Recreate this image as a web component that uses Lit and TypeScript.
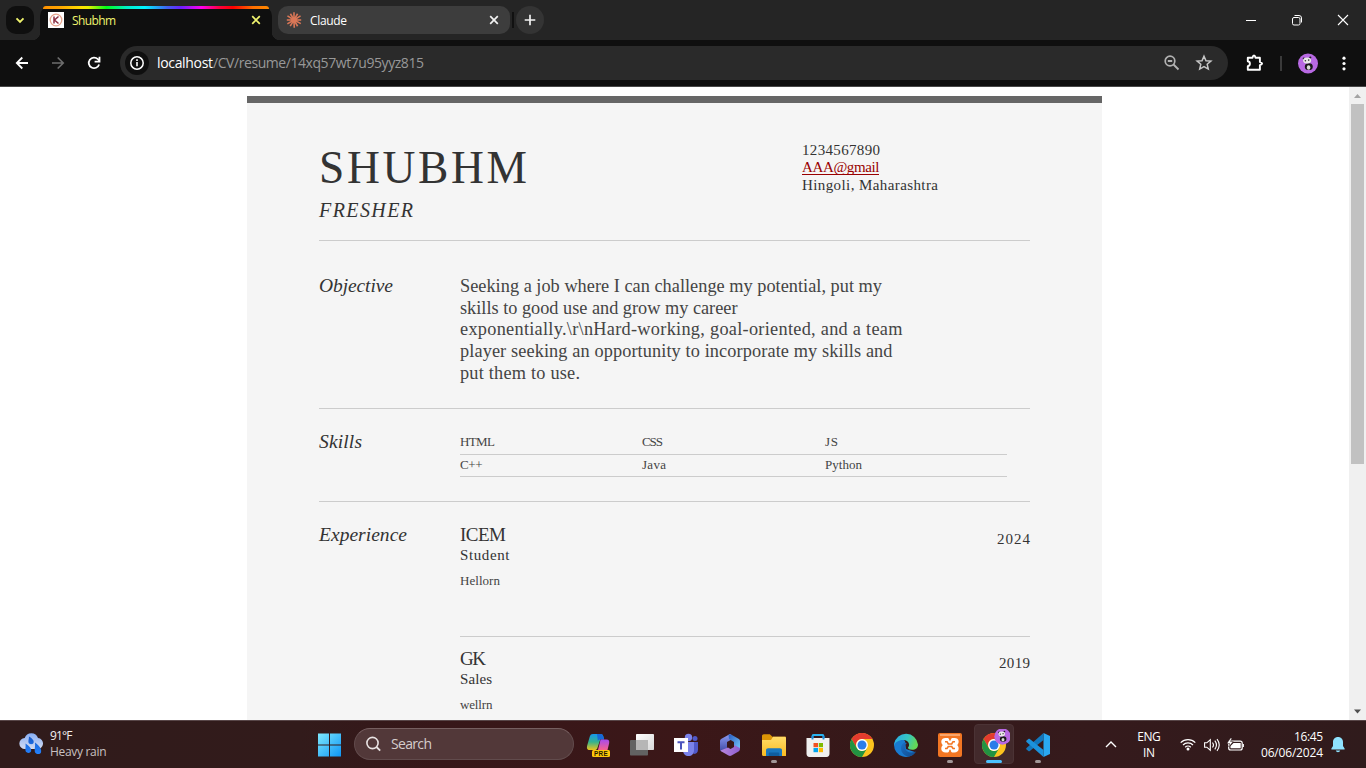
import { LitElement, html, css, svg } from "lit";
import { customElement, property } from "lit/decorators.js";

/** One line of text whose tracking is computed so that it spans a given measure. */
@customElement("fit-text")
class FitText extends LitElement {
  @property({ type: Number }) w = 0;
  @property() text = "";
  static styles = css`
    :host { display: inline-block; white-space: pre; }
    span { display: inline-block; }
  `;
  render() {
    return html`<span>${this.text}</span>`;
  }
  updated() {
    const el = this.renderRoot.querySelector("span") as HTMLElement;
    el.style.letterSpacing = "0px";
    const n = this.text.length - 1;
    const gap = n > 0 ? (this.w - el.getBoundingClientRect().width) / n : 0;
    el.style.letterSpacing = gap.toFixed(3) + "px";
    el.style.marginRight = (-gap).toFixed(3) + "px";
  }
}

const fit = (text: string, w: number) => html`<fit-text .w=${w} .text=${text}></fit-text>`;

const panda = svg`
  <circle cx="0" cy="0" r="10" fill="#b869e3"/>
  <ellipse cx="0.8" cy="3.200" rx="4" ry="3.400" fill="#1a1a1a"/>
  <ellipse cx="0.6" cy="4" rx="1.800" ry="2.200" fill="#dcdcdc"/>
  <circle cx="-4.200" cy="-5" r="1.100" fill="#222"/><circle cx="2.300" cy="-6" r="1.100" fill="#222"/>
  <ellipse cx="-0.9" cy="-3" rx="4" ry="3" fill="#e9e9e9"/>
  <circle cx="-2.600" cy="-2.800" r=".8" fill="#333"/><circle cx="0.7" cy="-3.400" r=".8" fill="#333"/>`;

const chromeLogo = svg`
  <circle cx="12" cy="12" r="12" fill="#fcc31e"/>
  <path d="M1.6 6A12 12 0 0 1 22.4 6H12A6 6 0 0 0 6.8 15Z" fill="#e33b2e"/>
  <path d="M1.6 6A12 12 0 0 0 12 24L17.2 15A6 6 0 0 1 6.8 15Z" fill="#229342"/>
  <circle cx="12" cy="12" r="5.9" fill="#fff"/><circle cx="12" cy="12" r="4.5" fill="#2b7de9"/>`;

const icon = (body: unknown, w = 24, h = 24) =>
  html`<svg width=${w} height=${h} viewBox="0 0 ${w} ${h}" fill="none">${body}</svg>`;

const icons = {
  copilot: icon(svg`
    <defs><linearGradient id="ca" x1="0" y1="0" x2="0" y2="1"><stop offset="0" stop-color="#1597ec"/><stop offset=".5" stop-color="#35b28f"/><stop offset="1" stop-color="#f0c419"/></linearGradient>
    <linearGradient id="cb" x1="0" y1="0" x2="0" y2="1"><stop offset="0" stop-color="#a54af0"/><stop offset="1" stop-color="#f8628c"/></linearGradient></defs>
    <path d="M7 1h7.5c2 0 2.5 1 3 3l.6 2.2h-3.8L11.4 15c-.5 1.500-1.400 2-2.800 2H3.800C1 17 .6 15 1.200 12.500L3.800 3.500C4.300 1.800 5.300 1 7 1Z" fill="url(#ca)"/>
    <path d="M11 1h3.500c2 0 2.500 1 3 3l.6 2.400h-3.800c-1.300 0-2 .6-2.400 1.800Z" fill="#1668d8"/>
    <path d="M15.500 6.400h5c2.400 0 3.200 1.500 2.600 4l-1.600 6.600H12l2-8c.4-1.700 0-2.600 1.500-2.600Z" fill="url(#cb)"/>
    <rect x="6" y="17" width="18" height="7" rx="1.500" fill="#fdc60b"/>
    <text x="15" y="22.800" font-family="Liberation Sans" font-size="6.300" font-weight="700" text-anchor="middle" letter-spacing=".4" fill="#221a00">PRE</text>`),
  taskview: icon(svg`
    <defs><linearGradient id="tv" x1="0" y1="0" x2="1" y2="1"><stop stop-color="#fff"/><stop offset="1" stop-color="#d8d8d8"/></linearGradient></defs>
    <rect x="0" y="7" width="18" height="15.500" rx=".8" fill="#626262"/>
    <rect x="6" y="1" width="18" height="16" rx=".8" fill="url(#tv)"/>
    <path d="M6 7h12v10H6z" fill="#b6b6b6"/>`),
  teams: icon(svg`
    <circle cx="21" cy="5.500" r="2.500" fill="#5059c9"/><circle cx="14.500" cy="4.500" r="3.700" fill="#7b83eb"/>
    <path d="M17 9h7v7.500c0 3-1.800 4.500-4.500 4.500Z" fill="#5059c9"/>
    <path d="M9 9h11v8c0 4-2.400 6-5.500 6S9 21 9 17Z" fill="#7b83eb"/>
    <path d="M0 5h14v14H0z" fill="#fff"/><path d="M3.500 8.300h7v1.900H8V16.500H6v-6.300H3.500z" fill="#4b53bc"/>`),
  m365: icon(svg`
    <defs><linearGradient id="ma" x1="0" y1="0" x2="0" y2="1"><stop stop-color="#8d9df5"/><stop offset="1" stop-color="#414aa4"/></linearGradient>
    <linearGradient id="mb" x1="0" y1="0" x2="1" y2="1"><stop stop-color="#275ac0"/><stop offset="1" stop-color="#75c8fb"/></linearGradient>
    <linearGradient id="mc" x1="0" y1="0" x2="1" y2="0"><stop stop-color="#b987dc"/><stop offset="1" stop-color="#8d5ed0"/></linearGradient></defs>
    <path d="M12 1 3.500 5.700C2.500 6.300 2 7 2 8.200v8c0 1.200.7 1.800 1.700 2.300L9 16V9l4.500-2.500V2Z" fill="url(#ma)"/>
    <path d="M10.500 1.700c1.200-.8 2-.7 3 0L20.500 5.700C21.500 6.300 22 7 22 8.200V16l-6-3V9L11 6Z" fill="url(#mb)"/>
    <path d="M2.500 17.500 10 14.500l2.500 1.500 3.500-2v-2l6 3c0 2.200-.5 2.900-1.500 3.500l-7 4c-1 .6-2 .6-3 0l-7-4Z" fill="url(#mc)"/>`),
  explorer: icon(svg`
    <defs><linearGradient id="fo" x1="0" y1="0" x2="0" y2="1"><stop stop-color="#ffdc69"/><stop offset="1" stop-color="#f9bb22"/></linearGradient></defs>
    <path d="M0 3c0-1 .8-1.800 1.800-1.800h6l2.700 2.600H24V12H0Z" fill="#dc9506"/>
    <path d="M0 7h9l2-3.300h11.500c.9 0 1.500.6 1.500 1.500v17.800H1.500C.6 23 0 22.400 0 21.500Z" fill="url(#fo)"/>
    <path d="M4 23v-5.500c0-1.400.8-2.200 2.200-2.200h11.600c1.400 0 2.200.8 2.200 2.200V23Z" fill="#1977bf"/><path d="M8 19.500h8c.8 0 1.300.5 1.300 1.300V23H6.700v-2.200C6.700 20 7.200 19.500 8 19.500Z" fill="#0f5d9f"/>`),
  store: icon(svg`
    <path d="M6.500 7V3.200c0-.7.400-1.200 1-1.200h9c.6 0 1 .5 1 1.200V7" stroke="#29b4f2" stroke-width="1.900"/>
    <path d="M.5 5h23v15.500c0 2.200-1 3.500-3 3.500h-17c-2 0-3-1.300-3-3.500Z" fill="#f0f0f0"/>
    <path d="M6.500 3v3.500M17.500 3v3.500" stroke="#1c8edb" stroke-width="1.900"/>
    <path d="M7.500 10H12v4.200H7.500z" fill="#f25022"/><path d="M12.800 10H17v4.200h-4.200z" fill="#7fba00"/><path d="M7.500 15H12v4.200H7.500z" fill="#00a4ef"/><path d="M12.800 15H17v4.200h-4.200z" fill="#ffb900"/>`),
  chrome: icon(chromeLogo),
  edge: icon(svg`
    <defs><linearGradient id="ea" x1="0" y1="0" x2="1" y2=".3"><stop stop-color="#28a9ea"/><stop offset=".6" stop-color="#36c6c0"/><stop offset="1" stop-color="#63d858"/></linearGradient>
    <linearGradient id="eb" x1="0" y1="0" x2="1" y2="1"><stop stop-color="#1b6fc4"/><stop offset="1" stop-color="#104a8e"/></linearGradient></defs>
    <path d="M.1 11C1 5 7 4 11 8l1 8 9.500 3.200A12 12 0 0 1 0 12Z" fill="#197bd0"/>
    <path d="M.2 11A12 12 0 0 1 24 11.500c0 3.500-2.500 5.300-5.700 5.300-2.600 0-4.300-1-4.300-2 0-.7 1.100-1.100 1.100-3C15 9 12.500 7 9 7 4.500 7 .7 9.500.2 13Z" fill="url(#ea)"/>
    <path d="M10.500 9.500c-2.500 1-3.500 3.500-3.500 5.800 0 4.700 4 8.700 8.500 8.200 2.500-.7 5-2.500 6.400-5-5.400 2.300-9.900.5-10.900-3.500-.5-2.300.2-4 2-5Z" fill="url(#eb)"/>`),
  xampp: icon(svg`
    <rect width="24" height="24" rx="2" fill="#f37623"/><path d="M2 1h20v2H2z" fill="#f9a66c"/>
    <path d="M7.500 5h2.500l2 2 2-2h2.500c5 0 5 5 2.700 7 2.300 2 2.300 7.500-2.700 7.500H14l-2-2-2 2H7.500c-5 0-5-5.500-2.700-7.500C2.500 10 2.500 5 7.500 5Z" fill="#fff"/>
    <path d="M7 8.700h2l1.300 2.300h3.400L15 8.700h2M7 15.500h2l1.300-2H13.700l1.300 2h2" stroke="#f37623" stroke-width="1.600"/>
    <path d="M12 4.500v3M12 16.800v3.200" stroke="#f37623" stroke-width="1.600"/>`),
  chromeProfile: icon(svg`<g transform="translate(4 4)">${chromeLogo}</g><g transform="translate(24.500 7.500) scale(.82)">${panda}</g>`, 32, 32),
  vscode: icon(svg`
    <path d="M17.500 0 24 3v18l-6.500 3Z" fill="#2aa9f2"/>
    <path d="M17.500 0v7L3.800 18c-.5.400-1 .4-1.400 0L.5 16.400c-.5-.5-.5-1 0-1.500Z" fill="#1277bd"/>
    <path d="M17.500 24v-7L3.800 6c-.5-.4-1-.4-1.400 0L.5 7.600c-.5.500-.5 1 0 1.500Z" fill="#1c92dc"/>`),
};

const apps = [
  { name: "copilot" }, { name: "taskview" }, { name: "teams" }, { name: "m365" },
  { name: "explorer", dot: true }, { name: "store" }, { name: "chrome" }, { name: "edge" },
  { name: "xampp", dot: true }, { name: "chromeProfile", active: true }, { name: "vscode", dot: true },
] as { name: keyof typeof icons; dot?: boolean; active?: boolean }[];

@customElement("browser-chrome")
class BrowserChrome extends LitElement {
  static styles = css`
    :host { display: block; font-family: "Open Sans", "Noto Sans", sans-serif; color: #fff; }
    svg { display: block; flex: none; }
    .strip { display: flex; height: 40px; background: #252525; box-sizing: border-box; padding-left: 6px; }
    .search { width: 28px; height: 28px; margin-top: 6px; border-radius: 10px; background: #0f0f0f; }
    .tab { width: 232px; height: 34px; margin: 6px 0 0 6px; background: #0f0f0f; border-radius: 10px 10px 0 0; position: relative; }
    .tab::before, .tab::after { content: ""; position: absolute; bottom: 0; width: 8px; height: 8px; }
    .tab::before { left: -8px; background: radial-gradient(circle at 0 0, transparent 8px, #0f0f0f 8.5px); }
    .tab::after { right: -8px; background: radial-gradient(circle at 100% 0, transparent 8px, #0f0f0f 8.5px); }
    .rainbow { height: 3px; margin: 0 3px; border-radius: 3px 3px 0 0; background: linear-gradient(90deg, #ff9000 0%, #ffa800 8%, #ffe000 17%, #e8f000 20%, #00ff18 28%, #00f0c8 37%, #00f4ff 45%, #4060f0 55%, #6a20ff 61%, #ff00f0 70%, #ff0040 78%, #ff0000 84%, #ff7000 93%, #ff8a00 100%); }
    .row { display: flex; align-items: center; }
    .tab .row { height: 22px; padding: 0 11px 0 8px; font-size: 12px; color: #f0f46e; }
    .tab fit-text, .tab2 fit-text { margin-left: 8px; flex: 1; font-size: 12px; line-height: 16px; padding-top: 1px; }
    .tab2 { width: 232px; height: 28px; margin: 6px 0 0 6px; background: #3d3d3d; border-radius: 10px; box-sizing: border-box; padding: 0 11px 0 8px; }
    .sep { width: 2px; height: 16px; background: #111; margin: 12px 2px 0 2px; }
    .plus { width: 28px; height: 28px; margin-top: 6px; border-radius: 14px; background: #343434; }
    .wins { margin-left: auto; height: 40px; }
    .bar { display: flex; align-items: center; height: 46px; background: #0f0f0f; border-bottom: 1px solid #474747; }
    .nav { width: 20px; margin-right: 16px; }
    .nav:first-child { margin-left: 12px; }
    .omni { width: 1108px; height: 34px; border-radius: 17px; background: #2a2a2a; display: flex; align-items: center; box-sizing: border-box; padding: 0 14px 0 5px; font-size: 14px; }
    .url { margin-left: 8px; flex: 1; line-height: 20px; }
    .path { color: #989898; }
  `;
  render() {
    const x = (c: string) => icon(svg`<path d="M1.200 1.200l7.600 7.600M8.800 1.200l-7.600 7.600" stroke=${c} stroke-width="1.700"/>`, 10, 10);
    const rays = [0, 30, 58, 90, 118, 150, 178, 212, 240, 270, 302, 330];
    return html`
      <div class="strip">
        <div class="search">${icon(svg`<path d="M10.500 12.300l3.500 3.500 3.500-3.500" stroke="#f0f46e" stroke-width="1.900"/>`, 28, 28)}</div>
        <div class="tab">
          <div class="rainbow"></div>
          <div class="row">
            ${icon(svg`<path fill="#fff" d="M0 0h16v16H0z"/><circle cx="8" cy="8" r="5.800" stroke="#e8a48c" stroke-width="1.300"/><path d="M6 4.500v7M10.500 4.500 6.500 8l4 3.500" stroke="#8c2f42" stroke-width="1.500"/>`, 16, 16)}
            ${fit("Shubhm", 44)}
            <span>${x("#f0f46e")}</span>
          </div>
        </div>
        <div class="tab2 row">
          ${icon(svg`${rays.map((a, i) => svg`<path transform="rotate(${a} 8 8)" d="M8 8V${i % 2 ? 0.8 : 0.3}" stroke="#d97757" stroke-width="1.600"/>`)}<circle cx="8" cy="8" r="3" fill="#d97757"/>`, 16, 16)}
          ${fit("Claude", 37)}
          <span>${x("#f2f2f2")}</span>
        </div>
        <div class="sep"></div>
        <div class="plus">${icon(svg`<path d="M14 8.700v10.600M8.700 14h10.600" stroke="#f2f2f2" stroke-width="1.700"/>`, 28, 28)}</div>
        <div class="wins row">
          ${icon(svg`<path d="M18 20.500h10" stroke="#fff"/>`, 46, 40)}
          ${icon(svg`<rect x="18.500" y="17.500" width="7.500" height="7.500" rx="1.500" stroke="#fff"/><path d="M20.500 15.500h4.500a2.500 2.500 0 0 1 2.500 2.500v4.500" stroke="#fff"/>`, 46, 40)}
          ${icon(svg`<path d="M18 15l10 10M28 15 18 25" stroke="#fff" stroke-width="1.100"/>`, 46, 40)}
        </div>
      </div>
      <div class="bar">
        <div class="nav">${icon(svg`<path d="M16 10H5M10.300 4.500 4.800 10l5.500 5.500" stroke="#fff" stroke-width="1.800"/>`, 20, 20)}</div>
        <div class="nav">${icon(svg`<path d="M4 10h11M9.700 4.500l5.500 5.500-5.500 5.500" stroke="#6d6d6d" stroke-width="1.700"/>`, 20, 20)}</div>
        <div class="nav">${icon(svg`<path d="M15.100 11.500a5.300 5.300 0 1 1-1.200-5.300L15.300 7.700" stroke="#fff" stroke-width="1.800"/><path d="M15.500 3.700v4.900h-4.900" stroke="#fff" stroke-width="1.800"/>`, 20, 20)}</div>
        <div class="omni">
          ${icon(svg`<circle cx="12" cy="12" r="12" fill="#0f0f0f"/><circle cx="12" cy="12" r="6.200" stroke="#fff" stroke-width="1.500"/><path d="M12 11v4.200M12 8.300v1.600" stroke="#fff" stroke-width="1.600"/>`)}
          <div class="url">${fit("localhost", 56)}<span class="path">${fit("/CV/resume/14xq57wt7u95yyz815", 211)}</span></div>
          ${icon(svg`<circle cx="8" cy="7" r="4.800" stroke="#b2b2b2" stroke-width="1.700"/><path d="M11.500 10.500l5 5M5.800 7h4.400" stroke="#b2b2b2" stroke-width="1.800"/>`, 32, 18)}
          ${icon(svg`<path d="M10 3.200l2 4.500 4.900.4-3.700 3.200 1.100 4.800L10 13.600l-4.300 2.500 1.100-4.800L3.100 8.100l4.900-.4Z" stroke="#c6c6c6" stroke-width="1.500"/>`, 20, 20)}
        </div>
        ${icon(svg`<path d="M19.800 11.700h4.700q.5-2.200 1.500-2.200t1.500 2.200h4.400v4.400q2.200.5 2.200 1.500t-2.200 1.500v4.700H19.800v-3.600c2.800-.5 2.800-4.400 0-4.900Z" stroke="#fff" stroke-width="1.900" stroke-linejoin="round"/><path d="M53 10v15" stroke="#3a3a3a" stroke-width="2"/><g transform="translate(80 17.500)">${panda}</g><circle cx="116" cy="12.200" r="1.600" fill="#fff"/><circle cx="116" cy="17.500" r="1.600" fill="#fff"/><circle cx="116" cy="22.800" r="1.600" fill="#fff"/>`, 138, 35)}
      </div>`;
  }
}

@customElement("resume-sheet")
class ResumeSheet extends LitElement {
  static styles = css`
    :host { display: block; box-sizing: border-box; width: 855px; height: 700px; margin: 9px 0 0 247px; padding: 0 72px; border-top: 7px solid #666; background: #f5f5f5; color: #333; font-family: "Liberation Serif", serif; }
    header, section { display: flex; box-sizing: border-box; border-bottom: 1px solid #ccc; }
    header { height: 138px; }
    .id { width: 483px; padding-top: 40px; display: flex; flex-direction: column; }
    h1, h2, h3, p { margin: 0; font-weight: 400; }
    h1 { font-size: 45.500px; line-height: 50px; }
    h2 { font-size: 20px; line-height: 24px; font-style: italic; margin-top: 5px; }
    .contact { padding-top: 39px; font-size: 15px; line-height: 17px; }
    .contact div { height: 17.300px; }
    .mail { color: #900; }
    .mail fit-text { border-bottom: 1px solid #900; height: 15px; }
    .label { width: 141px; flex: none; font-size: 19.500px; line-height: 24px; font-style: italic; }
    .objective { height: 168px; padding-top: 33px; }
    .objective .body { font-size: 18.300px; line-height: 21.700px; color: #444; padding-top: 2px; }
    .skills { height: 93px; padding-top: 21px; }
    .table { width: 547px; font-size: 13px; color: #444; }
    .tr { display: grid; grid-template-columns: 182px 183px 1fr; height: 22px; box-sizing: border-box; border-bottom: 1px solid #ccc; line-height: 18px; }
    .tr:first-child { height: 25px; padding-top: 3px; }
    .tr + .tr { padding-top: 1px; }
    .exp { padding-top: 21px; border: 0; }
    .jobs { flex: 1; }
    .job { display: flex; justify-content: space-between; height: 114px; box-sizing: border-box; border-bottom: 1px solid #ccc; }
    .job + .job { padding-top: 10px; border: 0; }
    h3 { font-size: 19px; line-height: 24px; }
    .role { font-size: 15px; line-height: 17px; }
    .note { font-size: 13px; line-height: 16px; margin-top: 9px; color: #444; }
    .year { font-size: 15px; line-height: 18px; padding-top: 7px; }
  `;
  render() {
    const lines: [string, number][] = [
      ["Seeking a job where I can challenge my potential, put my", 422],
      ["skills to good use and grow my career", 277.500],
      ["exponentially.\\r\\nHard-working, goal-oriented, and a team", 442.500],
      ["player seeking an opportunity to incorporate my skills and", 432.500],
      ["put them to use.", 120],
    ];
    const rows: [string, number][][] = [
      [["HTML", 35], ["CSS", 21], ["JS", 13]],
      [["C++", 22.500], ["Java", 24], ["Python", 37]],
    ];
    const jobs = [
      { org: ["ICEM", 46], role: ["Student", 49.500], note: ["Hellorn", 40], year: ["2024", 33] },
      { org: ["GK", 26], role: ["Sales", 32], note: ["wellrn", 32.500], year: ["2019", 31] },
    ] as Record<string, [string, number]>[];
    return html`
      <header>
        <div class="id"><h1>${fit("SHUBHM", 208)}</h1><h2>${fit("FRESHER", 94)}</h2></div>
        <div class="contact">
          <div>${fit("1234567890", 78)}</div>
          <div class="mail">${fit("AAA@gmail", 77.500)}</div>
          <div>${fit("Hingoli, Maharashtra", 136)}</div>
        </div>
      </header>
      <section class="objective">
        <div class="label">${fit("Objective", 74)}</div>
        <div class="body">${lines.map(([t, w]) => html`<div>${fit(t, w)}</div>`)}</div>
      </section>
      <section class="skills">
        <div class="label">${fit("Skills", 43)}</div>
        <div class="table">${rows.map((r) => html`<div class="tr">${r.map(([t, w]) => html`<span>${fit(t, w)}</span>`)}</div>`)}</div>
      </section>
      <section class="exp">
        <div class="label">${fit("Experience", 88)}</div>
        <div class="jobs">${jobs.map((j) => html`
          <div class="job">
            <div><h3>${fit(...j.org)}</h3><p class="role">${fit(...j.role)}</p><p class="note">${fit(...j.note)}</p></div>
            <div class="year">${fit(...j.year)}</div>
          </div>`)}</div>
      </section>`;
  }
}

@customElement("task-bar")
class TaskBar extends LitElement {
  static styles = css`
    :host { display: flex; height: 48px; box-sizing: border-box; border-top: 1px solid #584648; background: linear-gradient(90deg, #301b1b 0%, #321b1b 22%, #371719 32%, #3b1718 50%, #35191a 66%, #351a1c 80%, #301b1c 100%); color: #f3efef; font-family: "Open Sans", "Noto Sans", sans-serif; font-size: 12px; line-height: 16px; }
    svg { display: block; }
    .weather { width: 308px; display: flex; box-sizing: border-box; padding: 7px 0 0 19px; }
    .weather svg { margin-top: 4px; }
    .wtext { margin-left: 7px; }
    .dim { color: #c9c1c1; }
    .cell { width: 44px; height: 47px; display: flex; align-items: center; justify-content: center; position: relative; }
    .search { width: 220px; height: 32px; box-sizing: border-box; margin: 7px 2px 0; border: 1px solid #614b4c; border-top-color: #765f60; border-radius: 16px; background: #523839; display: flex; align-items: center; padding-left: 10px; font-size: 14px; line-height: 20px; color: #d5cccc; }
    .search fit-text { margin-left: 8px; }
    .active::before { content: ""; position: absolute; left: 2px; top: 3px; width: 38px; height: 38px; border: 1px solid #4b3335; border-radius: 4px; background: #432a2c; }
    .cell svg { position: relative; }
    .dot::after, .active::after { content: ""; position: absolute; left: 19px; top: 39px; width: 6px; height: 3px; border-radius: 2px; background: #a29798; }
    .active::after { left: 14px; width: 16px; background: #4cc2ff; }
    .tray { margin-left: auto; display: flex; align-items: center; }
    .lang { width: 40px; text-align: center; margin: 0 11px 0 12px; }
    .clock { text-align: right; margin: 0 8px 0 8px; width: 70px; }
    .bell { margin-right: 21px; }
    .hi { color: #fff; }
  `;
  render() {
    return html`
      <div class="weather">
        ${icon(svg`
          <defs><linearGradient id="cl" x1="0" y1="0" x2="0" y2="1"><stop stop-color="#86adf5"/><stop offset="1" stop-color="#d5dcf0"/></linearGradient><linearGradient id="dr" x1="0" y1="0" x2="0" y2="1"><stop stop-color="#1557c6"/><stop offset="1" stop-color="#2483ff"/></linearGradient></defs>
          <path d="M6 17a5.500 5.500 0 0 1-.3-11A7 7 0 0 1 19 6a5.500 5.500 0 0 1-1 11Z" fill="url(#cl)"/>
          <path d="M10 4.500c3.500 2 5.500 4.500 4.500 6.500-1 1.800-4.500 1.500-5-.5-.4-1.800.5-3.500.5-6ZM6.500 11.500c4 2.500 6.500 5.500 5.500 8-1.200 2.300-5 1.500-5.500-.8-.5-2.300.5-4.200 0-7.200ZM16 10.500c4.500 3 7 7 6 10-1.300 2.600-5.500 1.800-6.200-.8-.5-2.800.7-5.500.2-9.200Z" fill="url(#dr)"/>`, 24, 24)}
        <div class="wtext"><div>${fit("91°F", 22.500)}</div><div class="dim">${fit("Heavy rain", 56.500)}</div></div>
      </div>
      <div class="cell">${icon(svg`
        <defs><linearGradient id="wi" x1="0" y1="0" x2="24" y2="24" gradientUnits="userSpaceOnUse"><stop stop-color="#7fe9fd"/><stop offset="1" stop-color="#0a93f5"/></linearGradient></defs>
        <path d="M0 .5h11v11H0zM12 .5h11v11H12zM0 12.500h11v11H0zM12 12.500h11v11H12z" fill="url(#wi)"/>`)}</div>
      <div class="search">
        ${icon(svg`<circle cx="7.500" cy="8" r="5.600" stroke="#e8e2e2" stroke-width="1.600"/><path d="M11.500 12l3.700 3.700" stroke="#e8e2e2" stroke-width="1.800"/>`, 18, 18)}
        ${fit("Search", 41)}
      </div>
      ${apps.map((a) => html`<div class="cell ${a.dot ? "dot" : ""} ${a.active ? "active" : ""}">${icons[a.name]}</div>`)}
      <div class="tray">
        ${icon(svg`<path d="M1 8l5-5 5 5" stroke="#fff" stroke-width="1.400"/>`, 12, 11)}
        <div class="lang hi"><div>${fit("ENG", 23.500)}</div><div>${fit("IN", 12)}</div></div>
        ${icon(svg`
          <g stroke="#fff" stroke-width="1.200"><path d="M.7 6.600a10.300 10.300 0 0 1 14.600 0M3 9a7 7 0 0 1 10 0M5.200 11.200a4 4 0 0 1 5.600 0"/></g><circle cx="8" cy="13" r="1.500" fill="#fff"/>
          <g stroke="#fff" stroke-width="1.100"><path d="M24.600 6.800h2.200L30.300 3.800v10.400L26.800 11.200h-2.200ZM32.500 6.500c1.200 1.500 1.200 3.500 0 5M34.800 4.700c2 2.600 2 6 0 8.600M37 3.200c2.700 3.500 2.700 8.100 0 11.600"/></g>
          <rect x="48.700" y="5.200" width="13.500" height="8.800" rx="2" stroke="#fff" stroke-width="1.200"/><path d="M53.500 7h7.200v5.200H50.500V10ZM62.700 8h1.200v3h-1.200z" fill="#fff"/><path d="M50.500 2 46.800 7.500h2.700l-.8 3.500 4.500-5.500h-2.700l1.500-3.500Z" fill="#fff" stroke="#301b1c" stroke-width=".5"/>`, 65, 18)}
        <div class="clock hi"><div>${fit("16:45", 29)}</div><div>${fit("06/06/2024", 62)}</div></div>
        <div class="bell">${icon(svg`<path d="M7 0c3 0 5 2.200 5 5v4l1.600 2.600V12.500H.4v-.9L2 9V5c0-2.800 2-5 5-5ZM4.800 13.500h4.400c-.3 1-1.200 1.700-2.200 1.700s-1.900-.7-2.200-1.700Z" fill="#8fe3ff"/>`, 14, 16)}</div>
      </div>`;
  }
}

@customElement("app-root")
class AppRoot extends LitElement {
  static styles = css`
    :host { display: flex; flex-direction: column; width: 1366px; height: 768px; overflow: hidden; background: #fff; }
    .view { flex: 1; min-height: 0; display: flex; }
    .page { flex: 1; overflow: hidden; display: flow-root; }
    .scroll { width: 17px; background: #f0f0f0; display: flex; flex-direction: column; align-items: center; justify-content: space-between; }
    .thumb { width: 13px; height: 360px; background: #c1c1c1; }
    .spacer { flex: 1; }
    svg { display: block; }
  `;
  render() {
    return html`
      <browser-chrome></browser-chrome>
      <div class="view">
        <div class="page"><resume-sheet></resume-sheet></div>
        <div class="scroll">
          ${icon(svg`<path d="M5 11l3.500-4 3.500 4Z" fill="#a3a3a3"/>`, 17, 17)}
          <div class="thumb"></div><div class="spacer"></div>
          ${icon(svg`<path d="M5 6.500h7L8.500 10.500Z" fill="#505050"/>`, 17, 17)}
        </div>
      </div>
      <task-bar></task-bar>`;
  }
}
